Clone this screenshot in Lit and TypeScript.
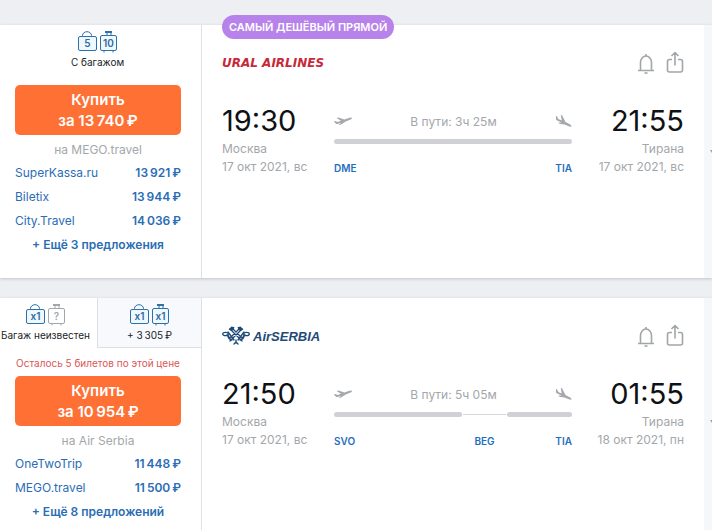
import { LitElement, html, css, svg, nothing } from "lit";
import { customElement, property } from "lit/decorators.js";

interface Bag { kind: "hand" | "case"; text: string; muted?: boolean }
interface Tab { bags: Bag[]; label: string; active: boolean }
interface Offer { name: string; price: string }
interface Stop { time: string; city: string; date: string }
interface Segment { kind: "flight" | "layover"; weight: number }
interface Ticket {
  badge?: string;
  tabs: Tab[];
  warning?: string;
  price: string;
  agency: string;
  offers: Offer[];
  more: string;
  airline: "ural" | "serbia";
  from: Stop;
  to: Stop;
  duration: string;
  segments: Segment[];
  codes: string[];
}

const tickets: Ticket[] = [
  {
    badge: "Самый дешёвый прямой",
    tabs: [
      { bags: [{ kind: "hand", text: "5" }, { kind: "case", text: "10" }], label: "С багажом", active: true },
    ],
    price: "13\u2009740\u2009₽",
    agency: "MEGO.travel",
    offers: [
      { name: "SuperKassa.ru", price: "13\u2009921\u2009₽" },
      { name: "Biletix", price: "13\u2009944\u2009₽" },
      { name: "City.Travel", price: "14\u2009036\u2009₽" },
    ],
    more: "+ Ещё 3 предложения",
    airline: "ural",
    from: { time: "19:30", city: "Москва", date: "17 окт 2021, вс" },
    to: { time: "21:55", city: "Тирана", date: "17 окт 2021, вс" },
    duration: "В пути: 3ч 25м",
    segments: [{ kind: "flight", weight: 1 }],
    codes: ["DME", "TIA"],
  },
  {
    tabs: [
      { bags: [{ kind: "hand", text: "x1" }, { kind: "case", text: "?", muted: true }], label: "Багаж неизвестен", active: true },
      { bags: [{ kind: "hand", text: "x1" }, { kind: "case", text: "x1" }], label: "+ 3\u2009305\u2009₽", active: false },
    ],
    warning: "Осталось 5 билетов по этой цене",
    price: "10\u2009954\u2009₽",
    agency: "Air Serbia",
    offers: [
      { name: "OneTwoTrip", price: "11\u2009448\u2009₽" },
      { name: "MEGO.travel", price: "11\u2009500\u2009₽" },
    ],
    more: "+ Ещё 8 предложений",
    airline: "serbia",
    from: { time: "21:50", city: "Москва", date: "17 окт 2021, вс" },
    to: { time: "01:55", city: "Тирана", date: "18 окт 2021, пн" },
    duration: "В пути: 5ч 05м",
    segments: [
      { kind: "flight", weight: 129 },
      { kind: "layover", weight: 43 },
      { kind: "flight", weight: 66 },
    ],
    codes: ["SVO", "BEG", "TIA"],
  },
];

const handBag = svg`
  <path d="M5.500 6.500V5.500a4.500 3.800 0 0 1 9 0v1"/>
  <rect x="1.500" y="6.500" width="18" height="14" rx="1.500" class="body"/>`;
const suitcase = svg`
  <path d="M8 2v4M12 2v4M5 20.500v2M14 20.500v2"/>
  <path d="M6 2h7" stroke-width="2"/>
  <rect x="1.500" y="5.500" width="16" height="15" rx="1.500" class="body"/>`;

const serbiaMark = svg`
  <g fill="none" stroke="#1f4a78" stroke-width="1.300" stroke-linecap="round">
    <path d="M8 3 20 15M11 3l9 9M20 3 8 15M17 3l-9 9M12 18l2-2 2 2M14 14v3"/>
    <path d="M6 6 12 14M22 6l-6 8M8 12 5 9M20 12l3-3"/>
    <ellipse cx="3.500" cy="8" rx="2.800" ry="1.700"/>
    <ellipse cx="24.500" cy="8" rx="2.800" ry="1.700"/>
    <path d="M6 9.500c0 3 1 4 4 4.500M22 9.500c0 3-1 4-4 4.500"/>
  </g>
  <path fill="#1f4a78" d="M6.500 3.500 9.500 0.500 12.500 1.200 11.500 4 9.500 5zM21.500 3.500 18.500 0.500 15.500 1.200 16.500 4 18.500 5z"/>`;

@customElement("flight-ticket")
export class FlightTicket extends LitElement {
  @property({ attribute: false }) ticket!: Ticket;

  static styles = css`
    :host { display: block; }
    * { box-sizing: border-box; }
    button { font: inherit; border: 0; background: none; padding: 0; cursor: pointer; }
    a { color: inherit; text-decoration: none; }
    .card {
      position: relative;
      display: grid;
      grid-template-columns: 202px 1fr 8px;
      background: #fff;
      box-shadow: 0 1px 3px #bfc3c9;
    }
    .side { border-right: 1px solid #dfe1e4; padding-bottom: 21px; }
    .tabs { display: flex; height: 50px; }
    .tab {
      flex: 0 0 97px;
      display: flex;
      flex-direction: column;
      align-items: center;
      padding-top: 5px;
      padding-right: 6px;
      font-size: 10px;
      line-height: 16px;
      color: #202428;
      white-space: nowrap;
    }
    .tab:only-child { flex: 1; }
    .tab.idle { flex: 1; padding-right: 0; background: #f7f9fc; border-left: 1px solid #dce0e5; border-bottom: 1px solid #dce0e5; }
    .bags { display: flex; gap: 2px; height: 24px; }
    .bag { fill: none; stroke: #2e71a8; stroke-width: 1; }
    .bag .body { fill: #edf8ff; }
    .bag text { fill: #34689f; stroke: none; font-size: 10px; font-weight: 600; text-anchor: middle; }
    .bag.muted { stroke: #a3a7ab; }
    .bag.muted .body { fill: #fff; }
    .bag.muted text { fill: #a3a7ab; }
    .offers { display: flex; flex-direction: column; padding: 10px 20px 0 15px; }
    .offers.warned { padding-top: 6px; }
    .warning { margin-bottom: 4px; font-size: 10px; line-height: 18px; color: #dc5656; text-align: center; white-space: nowrap; }
    .buy {
      height: 50px;
      border-radius: 5px;
      background: #ff7034;
      color: #fff;
      font-size: 15px;
      line-height: 21px;
      font-weight: 600;
      text-align: center;
    }
    .buy span { display: block; }
    .agency { font-size: 12px; line-height: 16px; margin: 7px 0 3px; color: #a3a7ab; text-align: center; }
    .offer { display: flex; justify-content: space-between; font-size: 12px; line-height: 24px; color: #2a6db5; }
    .price { font-weight: 600; }
    .more { font-size: 12px; line-height: 24px; font-weight: 600; color: #2a6db5; white-space: nowrap; }
    .main { padding: 24px 20px 0; }
    .badge {
      position: absolute;
      left: 222px;
      top: -10px;
      padding: 0 7px;
      border-radius: 12px;
      background: #b783ea;
      color: #fff;
      font-size: 11px;
      line-height: 24px;
      font-weight: 600;
      text-transform: uppercase;
    }
    .head { display: flex; justify-content: space-between; align-items: center; height: 28px; }
    .logo { display: flex; align-items: center; gap: 3px; white-space: nowrap; }
    .ural { font: italic bold 12px "DejaVu Sans", sans-serif; color: #c8283a; }
    .serbia { font: italic bold 13px "Liberation Sans", sans-serif; color: #1f4a78; }
    .actions { display: flex; gap: 10px; }
    .actions svg { display: block; fill: none; stroke: #a2a6a9; stroke-width: 1.6; stroke-linejoin: round; }
    .route { display: grid; grid-template-columns: 112px 1fr 112px; padding-top: 24px; }
    .time { font-size: 29px; line-height: 39px; color: #0f1114; }
    .place { font-size: 12px; line-height: 18px; color: #a3a7ab; white-space: nowrap; }
    .arrive { text-align: right; }
    .path { padding-top: 10px; }
    .ride { display: flex; justify-content: space-between; align-items: center; height: 20px; font-size: 12px; color: #a3a7ab; }
    .plane { fill: #a5a8ac; }
    .bar { display: flex; align-items: center; height: 5px; margin-top: 8px; gap: 1px; }
    .flight { height: 5px; border-radius: 3px; background: #cfd1d6; }
    .layover { height: 1px; background: #d5d7db; }
    .codes { display: grid; grid-template-columns: 129fr 43fr 66fr; margin-top: 15px; font-size: 10px; line-height: 18px; font-weight: 600; color: #1f6fc0; }
    .code:nth-child(2) { text-align: center; }
    .code:last-child { grid-column: 3; text-align: right; }
    .expand { display: flex; justify-content: flex-end; align-items: center; background: #f5f7f9; overflow: hidden; }
    .expand svg { flex: none; fill: #9da1a5; }
  `;

  private bag(b: Bag) {
    const hand = b.kind === "hand";
    return html`<svg class="bag ${b.muted ? "muted" : ""}" width="20" height="24" viewBox="0 0 20 24" aria-hidden="true">
      ${hand ? handBag : suitcase}
      <text x="${hand ? 10.5 : 9.5}" y="17">${b.text}</text>
    </svg>`;
  }

  private stop(s: Stop, side: string) {
    return html`<div class="${side}">
      <div class="time">${s.time}</div>
      <div class="place">${s.city}</div>
      <div class="place">${s.date}</div>
    </div>`;
  }

  render() {
    const t = this.ticket;
    return html`<article class="card">
      ${t.badge ? html`<div class="badge">${t.badge}</div>` : nothing}
      <div class="side">
        <div class="tabs">
          ${t.tabs.map((tab) => html`<button class="tab ${tab.active ? "" : "idle"}">
            <span class="bags">${tab.bags.map((b) => this.bag(b))}</span>
            <span>${tab.label}</span>
          </button>`)}
        </div>
        <div class="offers ${t.warning ? "warned" : ""}">
          ${t.warning ? html`<div class="warning">${t.warning}</div>` : nothing}
          <button class="buy"><span>Купить</span><span>за ${t.price}</span></button>
          <div class="agency">на ${t.agency}</div>
          ${t.offers.map((o) => html`<a class="offer" href="#"><span>${o.name}</span><span class="price">${o.price}</span></a>`)}
          <button class="more">${t.more}</button>
        </div>
      </div>
      <div class="main">
        <div class="head">
          ${t.airline === "ural"
            ? html`<div class="logo ural">URAL AIRLINES</div>`
            : html`<div class="logo serbia">
                <svg width="28" height="20" viewBox="0 0 28 20" aria-hidden="true">${serbiaMark}</svg>AirSERBIA
              </div>`}
          <div class="actions">
            <button aria-label="Следить за ценой">
              <svg width="20" height="24" viewBox="0 0 20 24">
                <path d="M4.500 19v-7.500a5.500 6.500 0 0 1 11 0V19M2 19.500h16M10 3v2"/>
                <path d="M8.500 22h3"/>
              </svg>
            </button>
            <button aria-label="Поделиться">
              <svg width="18" height="24" viewBox="0 0 18 24">
                <path d="M6 8.500H3.500a2 2 0 0 0-2 2v8.500a2 2 0 0 0 2 2h11a2 2 0 0 0 2-2v-8.500a2 2 0 0 0-2-2h-2.500M9 14.500V1.500M5.500 5 9 1.500 12.500 5"/>
              </svg>
            </button>
          </div>
        </div>
        <div class="route">
          ${this.stop(t.from, "depart")}
          <div class="path">
            <div class="ride">
              <svg class="plane" width="18" height="10" viewBox="0 0 18 10" aria-hidden="true">
                <path d="M0 5.300 1.200 5 3.500 6 7 4.700 2.600 2 4.500 1.500 10.400 3.500 14.800 2C16.200 1.500 17.600 1.300 17.900 1.900 18 2.500 17.200 3.200 16 3.700L11.800 5.400 6.600 8.700 4.600 9.200 7 6.700 3.500 7.900C2.500 8.200 1.900 7.900 1.400 7.300z"/>
              </svg>
              <span>${t.duration}</span>
              <svg class="plane" width="17" height="14" viewBox="0 0 17 14" aria-hidden="true">
                <path d="M1 2 2 2.300 3.300 5 6.700 6.600 5.800 0.800 7.200 1.600 10.500 8 14.700 10.300C16 11 16.700 12 16.400 12.500 16.100 13 15 12.800 13.800 12.300L9.500 10.600 4.500 9.800 3 8.800 6.500 8.600 2.200 6.600C1.300 6.100 1 5.700 1 4.800z"/>
              </svg>
            </div>
            <div class="bar">
              ${t.segments.map((s) => html`<div class="${s.kind}" style="flex: ${s.weight} 1 0"></div>`)}
            </div>
            <div class="codes">${t.codes.map((c) => html`<span class="code">${c}</span>`)}</div>
          </div>
          ${this.stop(t.to, "arrive")}
        </div>
      </div>
      <button class="expand" aria-label="Подробнее">
        <svg width="2" height="4" viewBox="0 0 2 4"><path d="M0 0h2v3z"/></svg>
      </button>
    </article>`;
  }
}

@customElement("app-root")
export class AppRoot extends LitElement {
  static styles = css`
    :host {
      display: block;
      box-sizing: border-box;
      min-height: 100vh;
      padding-top: 25px;
      background: #edeff3;
      font-family: Inter, "Noto Sans", sans-serif;
    }
    .list { display: flex; flex-direction: column; gap: 20px; }
  `;

  render() {
    return html`<main class="list">
      ${tickets.map((t) => html`<flight-ticket .ticket=${t}></flight-ticket>`)}
    </main>`;
  }
}
